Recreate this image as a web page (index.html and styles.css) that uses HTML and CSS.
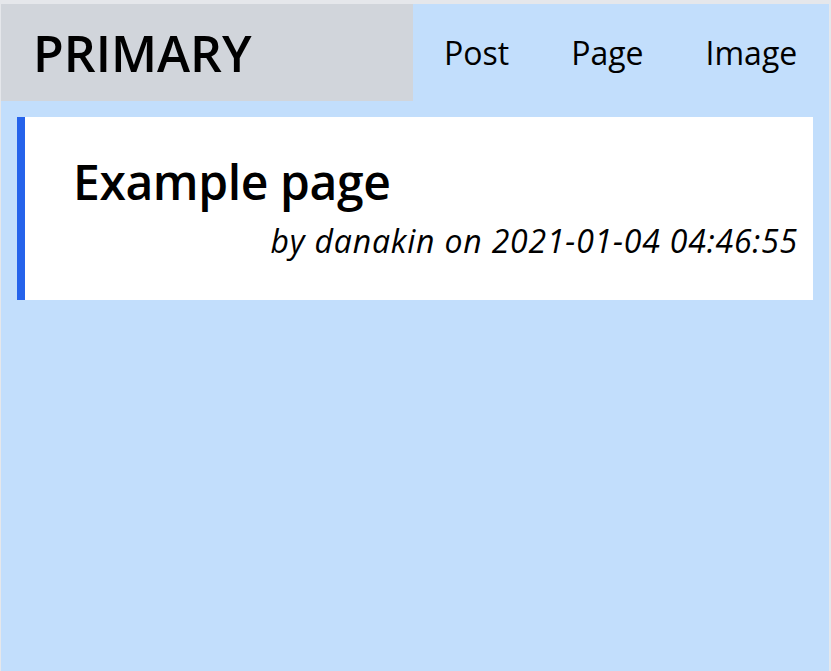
FILE: index.html
```html
<!DOCTYPE html>
<html>
<head>
<meta charset="utf-8">
<link rel="stylesheet" href="styles.css">
</head>
<body>
<div class="app">
  <header class="topbar">
    <div class="brand">PRIMARY</div>
    <nav class="nav">
      <a class="nav-link" href="#">Post</a>
      <a class="nav-link" href="#">Page</a>
      <a class="nav-link" href="#">Image</a>
    </nav>
  </header>
  <main class="content">
    <article class="card">
      <h1 class="card-title">Example page</h1>
      <p class="card-meta">by danakin on 2021-01-04 04:46:55</p>
    </article>
  </main>
</div>
</body>
</html>
```
FILE: styles.css
```css
html, body {
  height: 100%;
}
body {
  margin: 0;
  padding: 4px 2px 0 1px;
  box-sizing: border-box;
  background: #e5e7eb;
  font-family: "Open Sans", "Noto Sans", sans-serif;
  color: #000;
}
.app {
  height: 100%;
  background: #c2defc;
}
.topbar {
  display: flex;
  align-items: stretch;
  height: 97px;
}
.brand {
  flex: 0 0 412px;
  background: #d1d5db;
  display: flex;
  align-items: center;
  padding-left: 32px;
  box-sizing: border-box;
  font-size: 50px;
  font-weight: 600;
}
.nav {
  display: flex;
  align-items: center;
}
.nav-link {
  padding: 0 31px;
  font-size: 32px;
  color: #000;
  text-decoration: none;
  white-space: nowrap;
}
.content {
  padding: 16px;
}
.card {
  background: #fff;
  border-left: 8px solid #2563eb;
  height: 183px;
  box-sizing: border-box;
  padding: 32px 15px 0 48px;
}
.card-title {
  margin: 0;
  font-size: 48px;
  font-weight: 600;
  letter-spacing: -0.4px;
  line-height: normal;
}
.card-meta {
  margin: 5px 0 0;
  text-align: right;
  font-style: italic;
  font-size: 32px;
  letter-spacing: 0.8px;
  line-height: normal;
}
```
